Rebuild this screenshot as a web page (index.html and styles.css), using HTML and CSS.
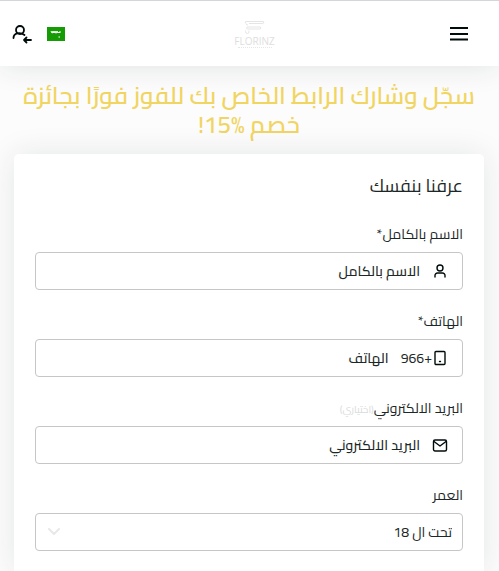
FILE: index.html
```html
<!DOCTYPE html>
<html lang="ar" dir="rtl">
<head>
<meta charset="utf-8">
<meta name="viewport" content="width=device-width, initial-scale=1">
<title>Florinz</title>
<link rel="stylesheet" href="styles.css">
</head>
<body>
<header class="header">
  <button class="icon-button menu" type="button" aria-label="القائمة">
    <svg width="20" height="16" viewBox="0 0 20 16" fill="none" stroke="currentColor" stroke-width="2"><path d="M1 2h18M1 8h18M1 13.500h18"/></svg>
  </button>
  <a class="logo" href="#" aria-label="Florinz">
    <svg width="22" height="15" viewBox="0 0 22 15" fill="none" stroke="currentColor" stroke-width=".8"><path d="M2 3.500Q0 1.500 2 1.500h17.500q1 2-1 2H5M2 3.500q0 1.500 2 1.500M3 7h13.500q1 2-1 2H3.500Q2 9 3 7M1.500 10.500v1q0 2 2 2t1.500-3"/></svg>
    <span class="logo-name">FLORINZ</span>
    <span class="logo-line"></span>
  </a>
  <div class="tools">
    <a class="flag" href="#" aria-label="العربية">
      <svg width="18" height="14" viewBox="0 0 18 14"><path fill="#159c05" d="M0 0h18v14H0z"/><path d="M4 4l1 2 1-2 1 2 1-2 1 2 1-2 1 2 1-1 1 1V4M5 6l2-1 2 1 2-1M11.500 10h1.500" fill="none" stroke="#fff"/></svg>
    </a>
    <a class="login" href="#" aria-label="تسجيل الدخول">
      <svg width="20" height="20" viewBox="0 0 20 20" fill="none" stroke="currentColor" stroke-width="1.800" stroke-linecap="round" stroke-linejoin="round"><circle cx="8" cy="6" r="4"/><path d="M1.500 14c0-5 6.500-6.500 11-3M19 16h-7M14.500 13.500L12 16l2.500 2.500"/></svg>
    </a>
  </div>
</header>
<main class="page">
  <h1 class="title">سجّل وشارك الرابط الخاص بك للفوز فورًا بجائزة خصم %15!</h1>
  <form class="card">
    <h2 class="card-title">عرفنا بنفسك</h2>
    <div class="field">
      <label class="label" for="name">الاسم بالكامل*</label>
      <div class="control">
        <svg class="icon" viewBox="0 0 16 16"><circle cx="8" cy="5" r="3"/><path d="M3 14v-1.500a2.500 2.500 0 0 1 2.500-2.500h5a2.500 2.500 0 0 1 2.500 2.500V14"/></svg>
        <input class="input" id="name" type="text" placeholder="الاسم بالكامل">
      </div>
    </div>
    <div class="field">
      <label class="label" for="phone">الهاتف*</label>
      <div class="control">
        <svg class="icon" viewBox="0 0 16 16"><rect x="3" y="1.500" width="10" height="13" rx="1"/><path d="M7.500 11.500h1"/></svg>
        <span class="code">+966</span>
        <input class="input" id="phone" type="tel" placeholder="الهاتف">
      </div>
    </div>
    <div class="field">
      <label class="label" for="email">البريد الالكتروني<span class="optional">(اختياري)</span></label>
      <div class="control">
        <svg class="icon" viewBox="0 0 16 16"><rect x="1.500" y="3" width="13" height="11" rx="1.500"/><path d="M2 4.500l6 4.500 6-4.500"/></svg>
        <input class="input" id="email" type="email" placeholder="البريد الالكتروني">
      </div>
    </div>
    <div class="field">
      <label class="label" for="age">العمر</label>
      <div class="control">
        <select class="input select" id="age"><option>تحت ال 18</option></select>
        <svg class="chevron" viewBox="0 0 12 8"><path d="M1 1l5 5 5-5"/></svg>
      </div>
    </div>
  </form>
</main>
</body>
</html>
```
FILE: styles.css
```css
* { box-sizing: border-box; }

body {
  display: flex;
  flex-direction: column;
  min-height: 100vh;
  margin: 0;
  background: #fcfcfc;
  color: #1c2828;
  font-family: Cairo, "DejaVu Sans", sans-serif;
  font-size: 14px;
}

.header {
  position: relative;
  display: grid;
  grid-template-columns: 1fr auto 1fr;
  align-items: center;
  height: 66px;
  padding: 0 30px 0 12px;
  border-top: 1px solid #d3d7dc;
  background: #fff;
  box-shadow: 0 0 30px rgba(13, 40, 30, 0.12);
}

.icon-button {
  justify-self: start;
  padding: 0;
  border: 0;
  background: none;
  color: #000b0b;
}

.icon-button svg, .flag svg, .login svg { display: block; }

.logo {
  display: flex;
  flex-direction: column;
  align-items: center;
  margin-left: 28px;
  color: #dedede;
  text-decoration: none;
}

.logo-name {
  font: 10px/12px "Open Sans", sans-serif;
}

.logo-line {
  width: 34px;
  border-top: 1px dotted #e6e6e6;
}

.tools {
  display: flex;
  align-items: center;
  justify-content: flex-end;
  gap: 15px;
}

.login { color: #000b0b; }

.page {
  display: flex;
  flex: 1;
  flex-direction: column;
  padding: 15px 15px 0 14px;
}

.title {
  margin: 0 0 15px;
  color: #f1d562;
  font-size: 24px;
  font-weight: 600;
  line-height: 29px;
  text-align: center;
}

.card {
  flex: 1;
  padding: 18px 21px 21px;
  border-radius: 5px 5px 0 0;
  background: #fff;
  box-shadow: 0 0 30px rgba(13, 40, 30, 0.1);
}

.card-title {
  margin: 0 0 20px;
  font-size: 18px;
  font-weight: 400;
  line-height: 28px;
}

.field + .field { margin-top: 17px; }

.label {
  display: block;
  height: 32px;
  line-height: 28px;
}

.optional {
  color: #d9dcdc;
  font-size: 10px;
}

.control {
  position: relative;
  display: flex;
  align-items: center;
  height: 38px;
  padding: 0 14px;
  border: 1px solid #c6c6c6;
  border-radius: 4px;
}

.icon, .chevron {
  flex: none;
  fill: none;
  stroke: currentColor;
  stroke-linecap: round;
  stroke-linejoin: round;
}

.icon {
  width: 16px;
  height: 16px;
  color: #000b0b;
  stroke-width: 1.400;
}

.input {
  flex: 1;
  min-width: 0;
  height: 100%;
  padding: 0 12px;
  border: 0;
  outline: 0;
  background: none;
  color: inherit;
  font: inherit;
  font-weight: 500;
  text-align: right;
}

.input::placeholder {
  color: inherit;
  opacity: 1;
}

.control:has(.select) { padding: 0; }

.select {
  padding: 0 10px;
  font-weight: 400;
  appearance: none;
}

.chevron {
  position: absolute;
  left: 12px;
  width: 12px;
  height: 8px;
  color: #e8e8e8;
  stroke-width: 2;
  pointer-events: none;
}
```
